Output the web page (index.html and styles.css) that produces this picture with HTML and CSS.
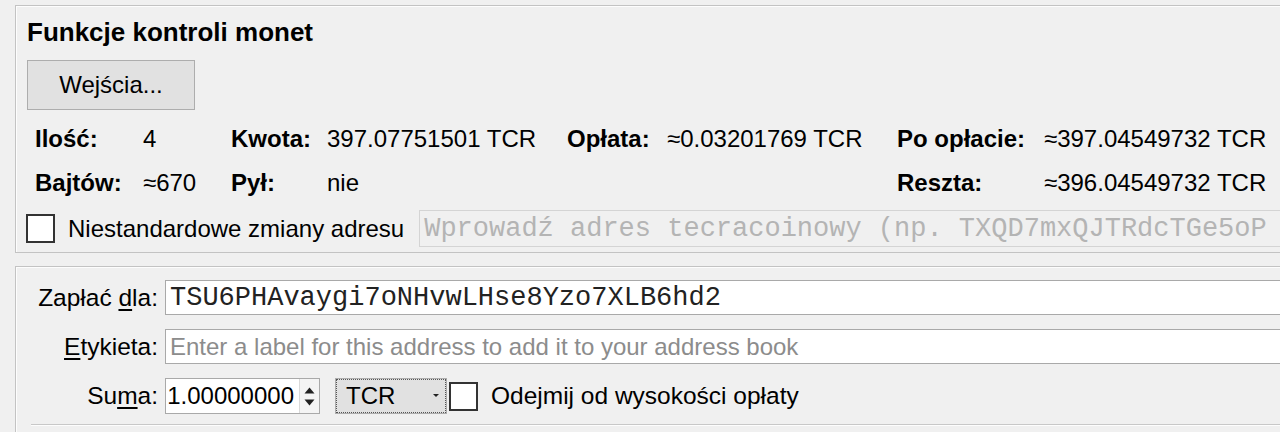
FILE: index.html
```html
<!DOCTYPE html>
<html lang="pl">
<head>
    <meta charset="UTF-8">
    <meta name="viewport" content="width=device-width, initial-scale=1.0">
    <title>Wyślij monety</title>
    <link rel="stylesheet" href="styles.css">
</head>
<body>
    <div class="group coin-control">
        <div class="group-title">Funkcje kontroli monet</div>
        <button class="btn">Wejścia...</button>

        <div class="stats">
            <span class="key">Ilość:</span><span class="val">4</span>
            <span class="key">Kwota:</span><span class="val">397.07751501 TCR</span>
            <span class="key">Opłata:</span><span class="val">≈0.03201769 TCR</span>
            <span class="key">Po opłacie:</span><span class="val">≈397.04549732 TCR</span>

            <span class="key">Bajtów:</span><span class="val">≈670</span>
            <span class="key">Pył:</span><span class="val">nie</span>
            <span></span><span></span>
            <span class="key">Reszta:</span><span class="val">≈396.04549732 TCR</span>
        </div>

        <div class="change-row">
            <span class="check"></span>
            <span class="check-label">Niestandardowe zmiany adresu</span>
            <div class="field disabled mono">
                <span class="placeholder">Wprowadź adres tecracoinowy (np. TXQD7mxQJTRdcTGe5oP</span>
            </div>
        </div>
    </div>

    <div class="group recipient">
        <div class="form">
            <label class="form-label">Zapłać <u>d</u>la:</label>
            <div class="field mono">TSU6PHAvaygi7oNHvwLHse8Yzo7XLB6hd2</div>

            <label class="form-label"><u>E</u>tykieta:</label>
            <div class="field"><span class="placeholder">Enter a label for this address to add it to your address book</span></div>

            <label class="form-label">Su<u>m</u>a:</label>
            <div class="amount-row">
                <div class="spin">
                    <div class="spin-text"><span>1.00000000</span></div>
                    <div class="spin-arrows">
                        <svg width="11" height="7" viewBox="0 0 11 7"><path d="M5.5 0.5 L10.5 6.5 L0.5 6.5 Z" fill="#222"/></svg>
                        <svg width="11" height="7" viewBox="0 0 11 7"><path d="M0.5 0.5 L10.5 0.5 L5.5 6.5 Z" fill="#222"/></svg>
                    </div>
                </div>
                <div class="combo">
                    <span>TCR</span>
                    <svg width="6" height="4" viewBox="0 0 6 4"><path d="M0 0 L6 0 L3 3 Z" fill="#222"/></svg>
                </div>
                <span class="check"></span>
                <span class="check-label">Odejmij od wysokości opłaty</span>
            </div>
        </div>
        <div class="separator"></div>
    </div>
</body>
</html>
```

FILE: styles.css
```css
body {
    margin: 0;
    background: #f0f0f0;
    font-family: "Liberation Sans", Arial, sans-serif;
    font-size: 24px;
    color: #000;
    overflow: hidden;
    height: 432px;
}

.group {
    margin-left: 15px;
    border: 1px solid #c3c3c3;
    border-right: none;
    box-shadow: inset 1px 1px 0 #fdfdfd;
}

.coin-control {
    margin-top: 5px;
    height: 248px;
    box-sizing: border-box;
    padding: 12px 0 0 11px;
}

.group-title {
    font-weight: bold;
    font-size: 26px;
    line-height: 28px;
}

.btn {
    display: block;
    margin-top: 14px;
    width: 168px;
    height: 50px;
    font-family: inherit;
    font-size: 24px;
    background: #e1e1e1;
    border: 1px solid #adadad;
    color: #000;
    padding: 0;
}

.stats {
    display: grid;
    grid-template-columns: 108px 88px 96px 240px 100px 230px 147px auto;
    row-gap: 16px;
    margin: 15px 0 0 8px;
    line-height: 28px;
    white-space: nowrap;
}

.key {
    font-weight: bold;
}

.change-row {
    display: flex;
    align-items: center;
    margin-top: 13px;
    margin-left: -1px;
}

.check {
    flex: none;
    width: 25px;
    height: 25px;
    background: #fff;
    border: 2px solid #333;
}

.check-label {
    margin-left: 13px;
    white-space: nowrap;
}

.change-row .field {
    margin-left: 15px;
    height: 37px;
}

.field {
    flex: 1;
    box-sizing: border-box;
    height: 35px;
    background: #fff;
    border: 1px solid #a9a9a9;
    border-right: none;
    padding-left: 4px;
    display: flex;
    align-items: center;
    white-space: nowrap;
    overflow: hidden;
}

.field.disabled {
    background: #f0f0f0;
    border-color: #d4d4d4;
}

.mono {
    font-family: "Liberation Mono", "Courier New", monospace;
    font-size: 27px;
    color: #222;
}

.placeholder {
    color: #8c8c8c;
}

.disabled .placeholder {
    color: #b4b4b4;
}

.recipient {
    margin-top: 13px;
    height: 166px;
    box-sizing: border-box;
    border-bottom: none;
    padding-top: 13px;
}

.form {
    display: grid;
    grid-template-columns: 142px 1fr;
    grid-template-rows: 35px 35px 36px;
    column-gap: 7px;
    row-gap: 14px;
    align-items: center;
}

.form-label {
    text-align: right;
    font-size: 24.5px;
}

.form-label u {
    text-underline-offset: 3px;
}

.amount-row {
    display: flex;
    align-items: center;
}

.spin {
    flex: none;
    display: flex;
    width: 155px;
    height: 36px;
    box-sizing: border-box;
    background: #fff;
    border: 1px solid #a9a9a9;
}

.spin-text {
    flex: 1;
    display: flex;
    justify-content: flex-end;
    align-items: center;
    overflow: hidden;
    padding-right: 5px;
}

.spin-text span {
    flex: none;
}

.spin-arrows {
    width: 19px;
    display: flex;
    flex-direction: column;
    align-items: center;
    justify-content: center;
    gap: 5px;
    background: #f4f4f4;
    border-left: 1px solid #d9d9d9;
}

.combo {
    flex: none;
    margin-left: 15px;
    width: 112px;
    height: 36px;
    box-sizing: border-box;
    background: #e1e1e1;
    border: 1px solid #adadad;
    outline: 1px dotted #555;
    outline-offset: -2px;
    display: flex;
    align-items: center;
    justify-content: space-between;
    padding: 0 7px 0 10px;
}

.amount-row .check {
    margin-left: 2px;
}

.amount-row .check-label {
    font-size: 24.5px;
}

.separator {
    margin: 10px 0 0 15px;
    height: 0;
    border-top: 1px solid #c8c8c8;
    border-bottom: 1px solid #fdfdfd;
}
```
